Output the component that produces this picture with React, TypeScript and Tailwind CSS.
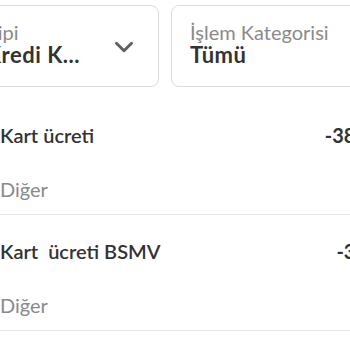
import { ChevronDown } from "lucide-react";

const rows = [
  { title: "Kart ücreti", category: "Diğer", amount: "-38,00 TL" },
  { title: "Kart  ücreti BSMV", category: "Diğer", amount: "-3,80 TL" },
];

export default function App() {
  return (
    <div className="h-[350px] w-[350px] overflow-hidden bg-white font-['Lato',sans-serif] text-[20px] leading-[24px]">
      <div className="flex gap-3 pt-[5px]">
        <div className="ml-[-33px] flex h-[82px] w-[192px] shrink-0 items-start justify-between rounded-lg border border-[#dcdcdc] pl-[18px] pr-[19px] pt-[15px]">
          <div className="flex flex-col">
            <span className="leading-[22px] text-[#8a8a8a]">Tipi</span>
            <span className="text-[22px] font-bold leading-[24px] tracking-[0.5px] text-[#333]">Kredi K...</span>
          </div>
          <ChevronDown size={30} strokeWidth={2.4} className="mt-[11px] text-[#606060]" />
        </div>
        <div className="flex h-[82px] w-[192px] shrink-0 flex-col rounded-lg border border-[#dcdcdc] pl-[18px] pt-[15px]">
          <span className="leading-[22px] text-[#8a8a8a]">İşlem Kategorisi</span>
          <span className="text-[22px] font-bold leading-[24px] tracking-[0.5px] text-[#333]">Tümü</span>
        </div>
      </div>
      <div className="mt-[12px] flex flex-col">
        {rows.map((row) => (
          <div key={row.title} className="flex flex-col border-b border-[#e6e6e6] pb-[13px] pt-[24px]">
            <div className="flex items-center justify-between">
              <span className="whitespace-pre font-semibold text-[#333]">{row.title}</span>
              <span className="mr-[-60px] font-bold text-[#333]">{row.amount}</span>
            </div>
            <span className="mt-[30px] text-[#8a8a8a]">{row.category}</span>
          </div>
        ))}
      </div>
    </div>
  );
}
